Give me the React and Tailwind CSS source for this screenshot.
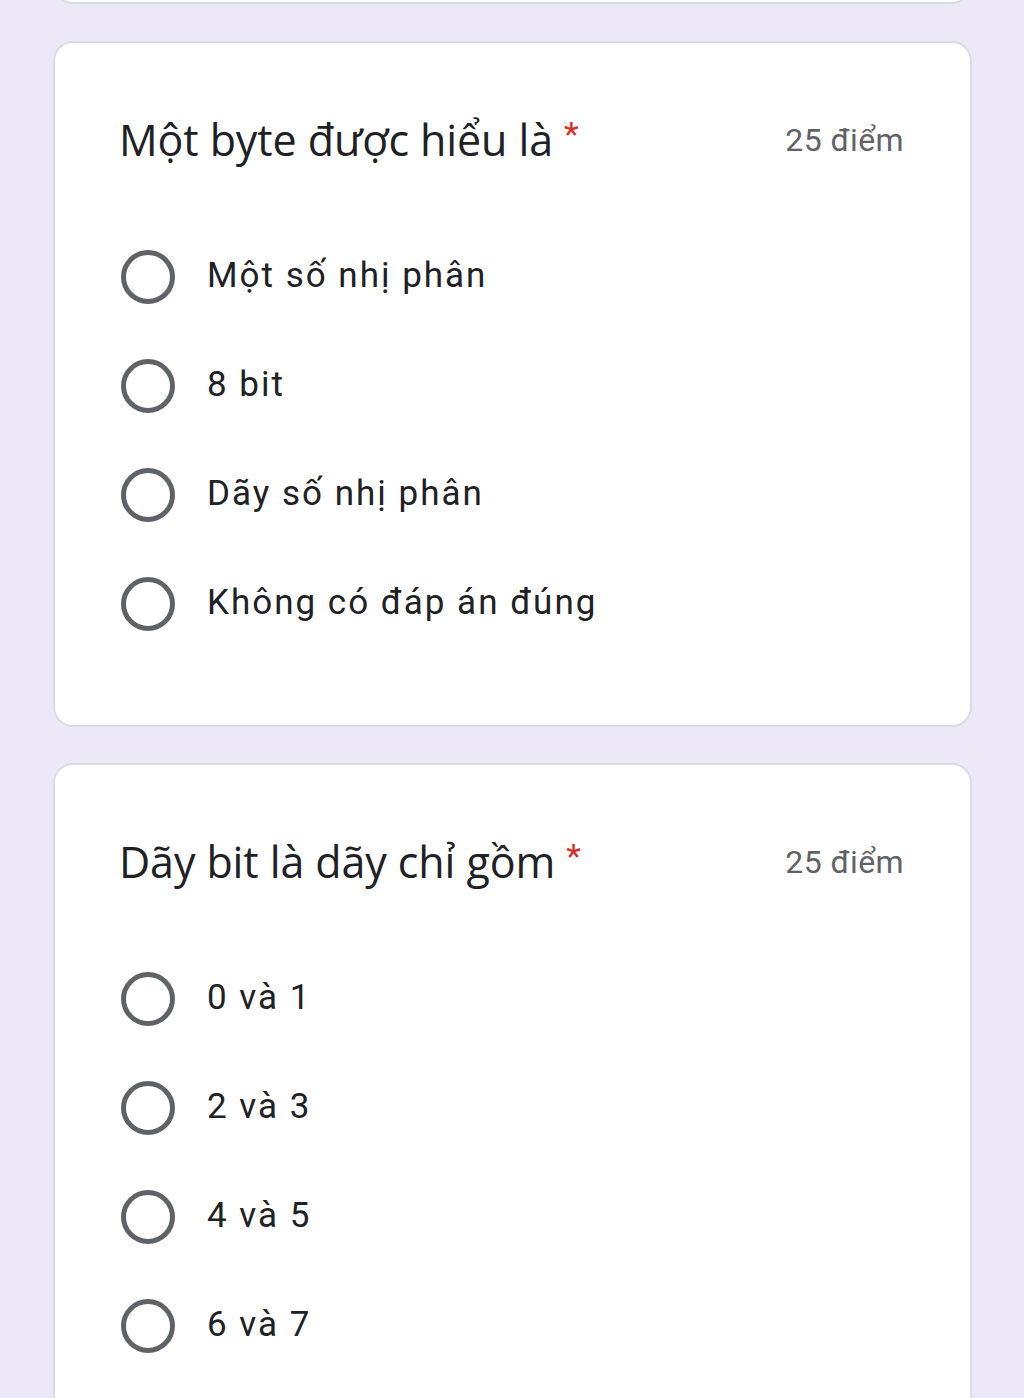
import React from "react";

const Radio = () => (
  <div className="w-[54px] h-[54px] rounded-full border-[5px] border-[#5f6368] shrink-0" />
);

const Card = ({ title, options }) => (
  <div className="bg-white border-2 border-[#dadce0] rounded-[20px] pt-[69px] pb-[67px] pl-[66px] pr-[66px]">
    <div className="flex items-center justify-between h-[56px]">
      <div className="-ml-[2px] text-[43px] text-[#202124] leading-[56px] tracking-[-0.1px] flex items-start" style={{ fontFamily: "'Open Sans', Roboto, sans-serif" }}>
        <span>{title}</span>
        <span className="ml-[11px] text-[34px] leading-[44px] text-[#d93025]" style={{ fontFamily: "Roboto, sans-serif" }}>*</span>
      </div>
      <div className="text-[32px] text-[#5f6368] leading-[56px] tracking-[0.4px]" style={{ fontFamily: "Roboto, sans-serif" }}>
        25 điểm
      </div>
    </div>
    <div className="mt-[54px] flex flex-col">
      {options.map((o) => (
        <div key={o} className="flex items-center h-[109px] gap-[32px]">
          <Radio />
          <span className="text-[35px] text-[#202124] tracking-[2px]" style={{ fontFamily: "Roboto, sans-serif" }}>{o}</span>
        </div>
      ))}
    </div>
  </div>
);

export default function App() {
  return (
    <div className="h-[1398px] w-[1024px] overflow-hidden bg-[#ede8f7] pl-[53px] pr-[52px]">
      <div className="h-[40px] -mt-[36px] bg-white border-2 border-[#dadce0] rounded-[20px]" />
      <div className="mt-[37px]">
        <Card title="Một byte được hiểu là" options={["Một số nhị phân", "8 bit", "Dãy số nhị phân", "Không có đáp án đúng"]} />
      </div>
      <div className="mt-[36px]">
        <Card title="Dãy bit là dãy chỉ gồm" options={["0 và 1", "2 và 3", "4 và 5", "6 và 7"]} />
      </div>
    </div>
  );
}
